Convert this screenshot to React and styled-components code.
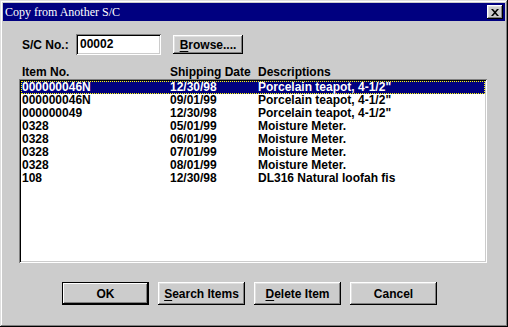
import React from "react";
import styled, { createGlobalStyle } from "styled-components";

const Global = createGlobalStyle`
  html, body { margin: 0; padding: 0; background: #cccccc; }
  body { font-family: "Liberation Sans", Arial, sans-serif; }
  * { box-sizing: border-box; }
`;

const Win = styled.div`
  width: 508px;
  height: 327px;
  background: #cccccc;
  padding: 3px;
  display: flex;
  flex-direction: column;
  box-shadow: inset -1px -1px #000, inset 1px 1px #dfdfdf, inset -2px -2px #808080, inset 2px 2px #fff;
`;

const TitleBar = styled.div`
  height: 18px;
  background: #000080;
  display: flex;
  align-items: center;
  justify-content: space-between;
  padding: 0 2px 0 2px;
`;

const Title = styled.span`
  color: #fff;
  font-family: "Liberation Serif", "Times New Roman", serif;
  font-size: 12px;
  line-height: 18px;
  white-space: nowrap;
`;

const CloseBtn = styled.div`
  width: 16px;
  height: 14px;
  background: #cccccc;
  display: flex;
  align-items: center;
  justify-content: center;
  box-shadow: inset -1px -1px #000, inset 1px 1px #fff, inset -2px -2px #808080, inset 2px 2px #dfdfdf;
`;

const Body = styled.div`
  padding: 13px 0 0 16px;
  display: flex;
  flex-direction: column;
`;

const Text = styled.span`
  font-size: 12px;
  font-weight: bold;
  color: #000;
  white-space: nowrap;
`;

const SCRow = styled.div`
  display: flex;
  align-items: center;
  height: 21px;
  padding-left: 3px;
`;

const Label = styled(Text)`
  width: 54px;
`;

const Input = styled.div`
  width: 85px;
  height: 21px;
  background: #fff;
  padding: 3px 0 0 4px;
  font-size: 12px;
  font-weight: bold;
  line-height: 14px;
  box-shadow: inset 1px 1px #808080, inset -1px -1px #fff, inset 2px 2px #000, inset -2px -2px #cccccc;
`;

const Button = styled.div`
  width: ${(p) => p.$w || 87}px;
  height: ${(p) => p.$h || 23}px;
  margin-left: ${(p) => p.$ml || 0}px;
  display: flex;
  align-items: center;
  justify-content: center;
  background: #cccccc;
  font-size: 12px;
  font-weight: bold;
  color: #000;
  white-space: nowrap;
  box-shadow: ${(p) =>
    p.$default
      ? "inset 0 0 0 1px #000, inset -2px -2px #000, inset 2px 2px #fff, inset -3px -3px #808080"
      : "inset -1px -1px #000, inset 1px 1px #fff, inset -2px -2px #808080, inset 2px 2px #dfdfdf"};
`;

const U = styled.span`
  text-decoration: underline;
  text-underline-offset: 2px;
`;

const Cols = styled.div`
  display: grid;
  grid-template-columns: 148px 88px 1fr;
  align-items: center;
`;

const Header = styled(Cols)`
  margin-top: 10px;
  height: 14px;
  padding-left: 3px;
  font-size: 12px;
  font-weight: bold;
  line-height: 14px;
`;

const List = styled.div`
  width: 468px;
  height: 184px;
  background: #fff;
  padding: 2px;
  box-shadow: inset 1px 1px #808080, inset -1px -1px #fff, inset 2px 2px #000, inset -2px -2px #cccccc;
`;

const Row = styled(Cols)`
  height: 13px;
  font-size: 12px;
  font-weight: bold;
  line-height: 11px;
  white-space: nowrap;
  background: ${(p) => (p.$sel ? "#000080" : "transparent")};
  color: ${(p) => (p.$sel ? "#fff" : "#000")};
  border: 1px ${(p) => (p.$sel ? "dotted #ffff00" : "solid transparent")};
`;

const Buttons = styled.div`
  display: flex;
  gap: 9px;
  margin-top: 19px;
  padding-left: 43px;
`;

const rows = [
  ["000000046N", "12/30/98", 'Porcelain teapot, 4-1/2"'],
  ["000000046N", "09/01/99", 'Porcelain teapot, 4-1/2"'],
  ["000000049", "12/30/98", 'Porcelain teapot, 4-1/2"'],
  ["0328", "05/01/99", "Moisture Meter."],
  ["0328", "06/01/99", "Moisture Meter."],
  ["0328", "07/01/99", "Moisture Meter."],
  ["0328", "08/01/99", "Moisture Meter."],
  ["108", "12/30/98", "DL316 Natural loofah fis"],
];

export default function App() {
  return (
    <>
      <Global />
      <Win>
        <TitleBar>
          <Title>Copy from Another S/C</Title>
          <CloseBtn>
            <svg width="8" height="7" viewBox="0 0 8 7">
              <path d="M0 0h2l2 2.2L6 0h2L5 3.5 8 7H6L4 4.8 2 7H0l3-3.5z" fill="#000" />
            </svg>
          </CloseBtn>
        </TitleBar>
        <Body>
          <SCRow>
            <Label>S/C No.:</Label>
            <Input>00002</Input>
            <Button $w={70} $h={19} $ml={12}>
              <U>B</U>rowse....
            </Button>
          </SCRow>
          <Header>
            <span>Item No.</span>
            <span>Shipping Date</span>
            <span>Descriptions</span>
          </Header>
          <List>
            {rows.map((r, i) => (
              <Row key={i} $sel={i === 0}>
                <span>{r[0]}</span>
                <span>{r[1]}</span>
                <span>{r[2]}</span>
              </Row>
            ))}
          </List>
          <Buttons>
            <Button $default>OK</Button>
            <Button>
              <U>S</U>earch Items
            </Button>
            <Button>
              <U>D</U>elete Item
            </Button>
            <Button>Cancel</Button>
          </Buttons>
        </Body>
      </Win>
    </>
  );
}
